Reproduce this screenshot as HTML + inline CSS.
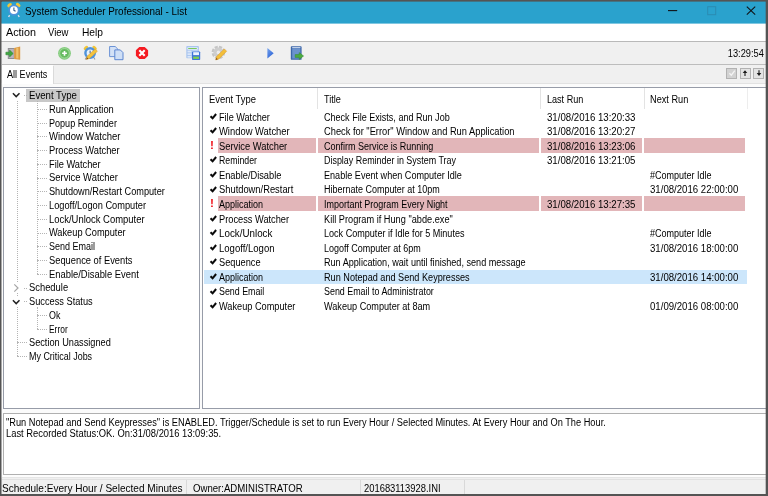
<!DOCTYPE html><html><head><meta charset="utf-8"><title>System Scheduler Professional - List</title><style>
html,body{margin:0;padding:0}
body{width:768px;height:496px;overflow:hidden;background:#555;position:relative;font-family:"Liberation Sans",sans-serif;}
.r{position:absolute}
.t{position:absolute;white-space:pre;line-height:1;transform-origin:0 0;}
svg{position:absolute;overflow:visible}

</style></head><body><div id="app" style="position:absolute;left:0;top:0;width:768px;height:496px;overflow:hidden;filter:blur(0.4px)">
<div class="r" style="left:0.00px;top:0.00px;width:768.00px;height:496.00px;background:#545454;"></div>
<div class="r" style="left:1.00px;top:1.00px;width:765.00px;height:23.00px;background:#2aa2cd;"></div>
<div class="r" style="left:1.00px;top:23.60px;width:765.00px;height:18.00px;background:#ffffff;"></div>
<div class="r" style="left:1.00px;top:23.00px;width:765.00px;height:1.00px;background:#7fc7e1;"></div>
<div class="r" style="left:1.00px;top:41.00px;width:765.00px;height:1.00px;background:#b9b9b9;"></div>
<div class="r" style="left:1.00px;top:42.00px;width:765.00px;height:22.00px;background:#f0f0f0;"></div>
<div class="r" style="left:1.00px;top:63.70px;width:765.00px;height:1.00px;background:#bdbdbd;"></div>
<div class="r" style="left:1.00px;top:64.70px;width:765.00px;height:19.00px;background:#f0f0f0;"></div>
<div class="r" style="left:1.00px;top:83.00px;width:765.00px;height:4.00px;background:#fbfbfb;"></div>
<div class="r" style="left:1.00px;top:82.60px;width:765.00px;height:1.00px;background:#e2e2e2;"></div>
<div class="r" style="left:2.00px;top:65.00px;width:51.00px;height:19.00px;background:#ffffff;"></div>
<div class="r" style="left:53.00px;top:65.50px;width:1.00px;height:18.00px;background:#dadada;"></div>
<div class="r" style="left:1.00px;top:87.00px;width:765.00px;height:391.00px;background:#fbfbfb;"></div>
<div class="r" style="left:1.00px;top:475.00px;width:765.00px;height:2.00px;background:#fdfdfd;"></div>
<div class="r" style="left:1.00px;top:477.00px;width:765.00px;height:17.00px;background:#f0f0f0;"></div>
<div class="r" style="left:1.00px;top:477.00px;width:765.00px;height:1.00px;background:#e5e5e5;"></div>
<div class="r" style="left:1.00px;top:479.00px;width:765.00px;height:1.00px;background:#e1e1e1;"></div>
<div class="r" style="left:1.00px;top:1.00px;width:765.00px;height:1.00px;background:#437384;"></div>
<div class="r" style="left:1.00px;top:2.00px;width:1.00px;height:21.00px;background:#3f7b90;"></div>
<div class="r" style="left:1.00px;top:23.00px;width:1.00px;height:1.00px;background:#6a8e9a;"></div>
<div class="r" style="left:1.00px;top:24.00px;width:1.00px;height:17.00px;background:#aaaaaa;"></div>
<div class="r" style="left:1.00px;top:41.00px;width:1.00px;height:1.00px;background:#868686;"></div>
<div class="r" style="left:1.00px;top:42.00px;width:1.00px;height:41.00px;background:#a2a2a2;"></div>
<div class="r" style="left:1.00px;top:83.00px;width:1.00px;height:395.00px;background:#a8a8a8;"></div>
<div class="r" style="left:1.00px;top:478.00px;width:1.00px;height:16.00px;background:#a2a2a2;"></div>
<div class="r" style="left:1.00px;top:1.00px;width:1.00px;height:1.00px;background:#545454;"></div>
<div class="r" style="left:3.40px;top:86.60px;width:196.20px;height:322.40px;background:#979ca8;"></div>
<div class="r" style="left:4.40px;top:87.60px;width:194.20px;height:320.40px;background:#ffffff;"></div>
<div class="r" style="left:202.00px;top:86.60px;width:565.00px;height:322.40px;background:#979ca8;"></div>
<div class="r" style="left:203.00px;top:87.60px;width:563.00px;height:320.40px;background:#ffffff;"></div>
<div class="r" style="left:3.40px;top:413.40px;width:763.60px;height:61.60px;background:#b0b0b0;"></div>
<div class="r" style="left:4.40px;top:414.40px;width:761.60px;height:59.60px;background:#ffffff;"></div>
<div class="r" style="left:26.00px;top:89.00px;width:53.50px;height:13.00px;background:#c8c8c8;"></div>
<div class="r" style="left:17.00px;top:101.15px;width:0;height:255.06px;border-left:1px dotted #b4b4b4"></div>
<div class="r" style="left:37.00px;top:101.15px;width:0;height:172.62px;border-left:1px dotted #b4b4b4"></div>
<div class="r" style="left:37.00px;top:307.25px;width:0;height:21.48px;border-left:1px dotted #b4b4b4"></div>
<div class="r" style="left:23.50px;top:95.15px;width:3.00px;height:0;border-top:1px dotted #b4b4b4"></div>
<div class="r" style="left:37.00px;top:108.89px;width:9.50px;height:0;border-top:1px dotted #b4b4b4"></div>
<div class="r" style="left:37.00px;top:122.63px;width:9.50px;height:0;border-top:1px dotted #b4b4b4"></div>
<div class="r" style="left:37.00px;top:136.37px;width:9.50px;height:0;border-top:1px dotted #b4b4b4"></div>
<div class="r" style="left:37.00px;top:150.11px;width:9.50px;height:0;border-top:1px dotted #b4b4b4"></div>
<div class="r" style="left:37.00px;top:163.85px;width:9.50px;height:0;border-top:1px dotted #b4b4b4"></div>
<div class="r" style="left:37.00px;top:177.59px;width:9.50px;height:0;border-top:1px dotted #b4b4b4"></div>
<div class="r" style="left:37.00px;top:191.33px;width:9.50px;height:0;border-top:1px dotted #b4b4b4"></div>
<div class="r" style="left:37.00px;top:205.07px;width:9.50px;height:0;border-top:1px dotted #b4b4b4"></div>
<div class="r" style="left:37.00px;top:218.81px;width:9.50px;height:0;border-top:1px dotted #b4b4b4"></div>
<div class="r" style="left:37.00px;top:232.55px;width:9.50px;height:0;border-top:1px dotted #b4b4b4"></div>
<div class="r" style="left:37.00px;top:246.29px;width:9.50px;height:0;border-top:1px dotted #b4b4b4"></div>
<div class="r" style="left:37.00px;top:260.03px;width:9.50px;height:0;border-top:1px dotted #b4b4b4"></div>
<div class="r" style="left:37.00px;top:273.77px;width:9.50px;height:0;border-top:1px dotted #b4b4b4"></div>
<div class="r" style="left:23.50px;top:287.51px;width:3.00px;height:0;border-top:1px dotted #b4b4b4"></div>
<div class="r" style="left:23.50px;top:301.25px;width:3.00px;height:0;border-top:1px dotted #b4b4b4"></div>
<div class="r" style="left:37.00px;top:314.99px;width:9.50px;height:0;border-top:1px dotted #b4b4b4"></div>
<div class="r" style="left:37.00px;top:328.73px;width:9.50px;height:0;border-top:1px dotted #b4b4b4"></div>
<div class="r" style="left:17.00px;top:342.47px;width:9.50px;height:0;border-top:1px dotted #b4b4b4"></div>
<div class="r" style="left:17.00px;top:356.21px;width:9.50px;height:0;border-top:1px dotted #b4b4b4"></div>
<div class="r" style="left:12.00px;top:90.15px;width:10.00px;height:10.00px;background:#fff;"></div>
<svg style="left:11.40px;top:91.45px" width="10" height="8" viewBox="0 0 10 8"><path d="M1.9 2.3 L5.2 5.6 L8.5 2.3" fill="none" stroke="#222" stroke-width="1.5"/></svg>
<div class="r" style="left:12.00px;top:282.51px;width:10.00px;height:10.00px;background:#fff;"></div>
<svg style="left:12.40px;top:282.51px" width="8" height="10" viewBox="0 0 8 10"><path d="M2.3 1.3 L6 5 L2.3 8.7" fill="none" stroke="#a6a6a6" stroke-width="1.2"/></svg>
<div class="r" style="left:12.00px;top:296.25px;width:10.00px;height:10.00px;background:#fff;"></div>
<svg style="left:11.40px;top:297.55px" width="10" height="8" viewBox="0 0 10 8"><path d="M1.9 2.3 L5.2 5.6 L8.5 2.3" fill="none" stroke="#222" stroke-width="1.5"/></svg>
<div class="r" style="left:317.30px;top:88.00px;width:1.00px;height:20.50px;background:#e3e3e3;"></div>
<div class="r" style="left:540.00px;top:88.00px;width:1.00px;height:20.50px;background:#e3e3e3;"></div>
<div class="r" style="left:643.60px;top:88.00px;width:1.00px;height:20.50px;background:#e3e3e3;"></div>
<div class="r" style="left:746.80px;top:88.00px;width:1.00px;height:20.50px;background:#ededed;"></div>
<svg style="left:209.5px;top:112.60px" width="7" height="7" viewBox="0 0 7 7"><path d="M0.5 3.2 L2.6 5.3 L6.1 1.0" fill="none" stroke="#0a0a0a" stroke-width="2"/></svg>
<svg style="left:209.5px;top:127.18px" width="7" height="7" viewBox="0 0 7 7"><path d="M0.5 3.2 L2.6 5.3 L6.1 1.0" fill="none" stroke="#0a0a0a" stroke-width="2"/></svg>
<div class="r" style="left:217.70px;top:138.16px;width:98.70px;height:14.70px;background:#e2b6b9;"></div>
<div class="r" style="left:318.20px;top:138.16px;width:220.90px;height:14.70px;background:#e2b6b9;"></div>
<div class="r" style="left:541.20px;top:138.16px;width:100.60px;height:14.70px;background:#e2b6b9;"></div>
<div class="r" style="left:644.40px;top:138.16px;width:101.10px;height:14.70px;background:#e2b6b9;"></div>
<svg style="left:209.5px;top:156.34px" width="7" height="7" viewBox="0 0 7 7"><path d="M0.5 3.2 L2.6 5.3 L6.1 1.0" fill="none" stroke="#0a0a0a" stroke-width="2"/></svg>
<svg style="left:209.5px;top:170.92px" width="7" height="7" viewBox="0 0 7 7"><path d="M0.5 3.2 L2.6 5.3 L6.1 1.0" fill="none" stroke="#0a0a0a" stroke-width="2"/></svg>
<svg style="left:209.5px;top:185.50px" width="7" height="7" viewBox="0 0 7 7"><path d="M0.5 3.2 L2.6 5.3 L6.1 1.0" fill="none" stroke="#0a0a0a" stroke-width="2"/></svg>
<div class="r" style="left:217.70px;top:196.48px;width:98.70px;height:14.70px;background:#e2b6b9;"></div>
<div class="r" style="left:318.20px;top:196.48px;width:220.90px;height:14.70px;background:#e2b6b9;"></div>
<div class="r" style="left:541.20px;top:196.48px;width:100.60px;height:14.70px;background:#e2b6b9;"></div>
<div class="r" style="left:644.40px;top:196.48px;width:101.10px;height:14.70px;background:#e2b6b9;"></div>
<svg style="left:209.5px;top:214.66px" width="7" height="7" viewBox="0 0 7 7"><path d="M0.5 3.2 L2.6 5.3 L6.1 1.0" fill="none" stroke="#0a0a0a" stroke-width="2"/></svg>
<svg style="left:209.5px;top:229.24px" width="7" height="7" viewBox="0 0 7 7"><path d="M0.5 3.2 L2.6 5.3 L6.1 1.0" fill="none" stroke="#0a0a0a" stroke-width="2"/></svg>
<svg style="left:209.5px;top:243.82px" width="7" height="7" viewBox="0 0 7 7"><path d="M0.5 3.2 L2.6 5.3 L6.1 1.0" fill="none" stroke="#0a0a0a" stroke-width="2"/></svg>
<svg style="left:209.5px;top:258.40px" width="7" height="7" viewBox="0 0 7 7"><path d="M0.5 3.2 L2.6 5.3 L6.1 1.0" fill="none" stroke="#0a0a0a" stroke-width="2"/></svg>
<div class="r" style="left:203.80px;top:270.08px;width:543.50px;height:13.90px;background:#cce6fb;"></div>
<svg style="left:209.5px;top:272.98px" width="7" height="7" viewBox="0 0 7 7"><path d="M0.5 3.2 L2.6 5.3 L6.1 1.0" fill="none" stroke="#0a0a0a" stroke-width="2"/></svg>
<svg style="left:209.5px;top:287.56px" width="7" height="7" viewBox="0 0 7 7"><path d="M0.5 3.2 L2.6 5.3 L6.1 1.0" fill="none" stroke="#0a0a0a" stroke-width="2"/></svg>
<svg style="left:209.5px;top:302.14px" width="7" height="7" viewBox="0 0 7 7"><path d="M0.5 3.2 L2.6 5.3 L6.1 1.0" fill="none" stroke="#0a0a0a" stroke-width="2"/></svg>
<div class="r" style="left:186.00px;top:479.50px;width:1.00px;height:14.50px;background:#d9d9d9;"></div>
<div class="r" style="left:360.00px;top:479.50px;width:1.00px;height:14.50px;background:#d9d9d9;"></div>
<div class="r" style="left:464.00px;top:479.50px;width:1.00px;height:14.50px;background:#d9d9d9;"></div>
<svg style="left:6.00px;top:2.00px" width="16" height="16" viewBox="0 0 16 16">
<ellipse cx="3.6" cy="3.2" rx="2.6" ry="1.7" transform="rotate(-38 3.6 3.2)" fill="#f0c63a"/>
<ellipse cx="12.2" cy="3.0" rx="2.6" ry="1.7" transform="rotate(38 12.2 3.0)" fill="#f0c63a"/>
<path d="M3.6 13.2 L2.6 15 M12.2 13.2 L13.2 15" stroke="#d8dde8" stroke-width="1.4"/>
<circle cx="7.9" cy="8.1" r="5.6" fill="#4f93dc"/>
<circle cx="7.9" cy="8.1" r="3.9" fill="#ffffff"/>
<path d="M7.9 5.6 V8.3 L9.6 9.2" stroke="#3a5f8c" stroke-width="1.1" fill="none"/>
</svg>
<svg style="left:4.00px;top:44.00px" width="20" height="18" viewBox="0 0 20 18">
<rect x="3.8" y="4" width="6.6" height="11" fill="#8f8f93"/>
<rect x="4.8" y="5" width="5" height="9" fill="#b9b3bf"/>
<path d="M10.1 4 L16.2 2.4 L16.2 15.8 L10.1 15 Z" fill="#dc9a45"/>
<path d="M12.2 4.2 L14.4 3.6 L14.4 14.6 L12.2 14.2 Z" fill="#f0c26a"/>
<path d="M1.9 8.2 H5.6 V6.1 L9.2 9.5 L5.6 12.9 V10.8 H1.9 Z" fill="#3fa640" stroke="#2f8a33" stroke-width="0.6"/>
</svg>
<svg style="left:57.00px;top:46.00px" width="15" height="15" viewBox="0 0 15 15">
<circle cx="7.5" cy="7.3" r="6.4" fill="#84cb7e"/>
<circle cx="7.5" cy="7.3" r="4.8" fill="#66bb60" stroke="#a8dea1" stroke-width="0.8"/>
<path d="M7.5 4.9 V9.7 M5.1 7.3 H9.9" stroke="#fff" stroke-width="1.6"/>
</svg>
<svg style="left:82.00px;top:45.00px" width="17" height="16" viewBox="0 0 17 16">
<ellipse cx="3.9" cy="2.9" rx="2.5" ry="1.6" transform="rotate(-38 3.9 2.9)" fill="#f0c437"/>
<ellipse cx="12.6" cy="2.9" rx="2.5" ry="1.6" transform="rotate(38 12.6 2.9)" fill="#f0c437"/>
<path d="M4.2 12.8 L3.2 14.5 M12 12.8 L13 14.5" stroke="#9a9a9a" stroke-width="1.1"/>
<circle cx="8.1" cy="8" r="5.9" fill="#4f93dc"/>
<circle cx="8.1" cy="8" r="3.5" fill="#e8f2fc"/>
<path d="M8.1 5.6 V8.2 L9.4 9" stroke="#3a5f8c" stroke-width="1" fill="none"/>
<path d="M15.4 6.3 L7.4 13.4 L4.4 14.4 L5.2 11.2 L13.2 4 Z" fill="#f4c33c" stroke="#dfa02c" stroke-width="0.6"/>
<path d="M4.4 14.4 L4.9 12.3 L6.4 13.7 Z" fill="#7a4a1c"/>
</svg>
<svg style="left:108.00px;top:45.00px" width="16" height="16" viewBox="0 0 16 16">
<path d="M1.6 1.5 H7.2 L9.9 4.2 V11.6 H1.6 Z" fill="#d3e1f6" stroke="#6c93d6" stroke-width="1"/>
<path d="M6.8 4.9 H12.3 L15 7.6 V14.7 H6.8 Z" fill="#cfdff6" stroke="#5c86d0" stroke-width="1"/>
</svg>
<svg style="left:135.00px;top:46.00px" width="14" height="14" viewBox="0 0 14 14">
<path d="M4.3 0.9 H9.7 L13.1 4.3 V9.7 L9.7 13.1 H4.3 L0.9 9.7 V4.3 Z" fill="#f51b22"/>
<path d="M4.3 4.3 L9.7 9.7 M9.7 4.3 L4.3 9.7" stroke="#fff" stroke-width="2.1"/>
</svg>
<svg style="left:185.00px;top:45.00px" width="16" height="16" viewBox="0 0 16 16">
<rect x="1.3" y="1.1" width="12.6" height="12.2" rx="0.8" fill="#a9c5ee"/>
<rect x="2.5" y="2.4" width="10.2" height="2.2" fill="#f4f8ff"/>
<rect x="3.2" y="3" width="8.6" height="0.9" fill="#6cc24a"/>
<rect x="2.5" y="5.6" width="4" height="1.8" fill="#dbe7f9"/><rect x="7.3" y="5.6" width="5.4" height="1.8" fill="#dbe7f9"/>
<rect x="2.5" y="8.3" width="4" height="1.8" fill="#dbe7f9"/>
<rect x="2.5" y="11" width="4" height="1.6" fill="#dbe7f9"/>
<rect x="7" y="6.5" width="8.2" height="8.4" rx="0.7" fill="#3f75d8"/>
<rect x="8.2" y="7.2" width="5.8" height="2.9" fill="#eef4ff"/>
<rect x="8.2" y="11.6" width="5.8" height="2.3" fill="#7fd04e"/>
</svg>
<svg style="left:211.00px;top:45.00px" width="17" height="16" viewBox="0 0 17 16">
<circle cx="7.4" cy="7.4" r="5.3" fill="none" stroke="#c4c4c4" stroke-width="3" stroke-dasharray="2.9 1.26"/>
<circle cx="7.4" cy="7.4" r="5" fill="#cdcdcd"/>
<circle cx="7.4" cy="7.4" r="1.8" fill="#ececec"/>
<path d="M15.6 6.2 L7.9 13.9 L4.7 14.9 L5.6 11.6 L13.3 3.9 Z" fill="#f3bf3a" stroke="#dc9c2c" stroke-width="0.6"/>
<path d="M4.7 14.9 L5.3 12.8 L6.8 14.2 Z" fill="#8a531e"/>
</svg>
<svg style="left:266.00px;top:46.00px" width="9" height="14" viewBox="0 0 9 14">
<defs><linearGradient id="pg" x1="0" y1="0" x2="0.6" y2="1"><stop offset="0" stop-color="#7aa7ee"/><stop offset="1" stop-color="#2b62d6"/></linearGradient></defs>
<path d="M1.4 1.9 L7.7 7.2 L1.4 12.5 Z" fill="url(#pg)"/>
</svg>
<svg style="left:290.00px;top:45.00px" width="15" height="16" viewBox="0 0 15 16">
<rect x="0.8" y="1.2" width="10.8" height="13.6" rx="0.9" fill="#3c66a9"/>
<rect x="2.2" y="3.4" width="8.2" height="10.2" fill="#6b93cd"/>
<rect x="2.2" y="2.2" width="8.2" height="0.9" fill="#dfe9f7"/>
<path d="M5.2 9.6 H9.2 V7.6 L13.6 11 L9.2 14.4 V12.4 H5.2 Z" fill="#4cab3f" stroke="#33892f" stroke-width="0.5"/>
</svg>
<svg style="left:660.00px;top:2.00px" width="100" height="20" viewBox="0 0 100 20">
<path d="M8 8.6 H17.2" stroke="#101418" stroke-width="1.1"/>
<rect x="47.7" y="4.7" width="8" height="8" fill="none" stroke="#2b8cb2" stroke-width="1"/>
<path d="M86.8 4.6 L95.2 12.6 M95.2 4.6 L86.8 12.6" stroke="#101418" stroke-width="1.1"/>
</svg>
<div class="r" style="left:726.20px;top:68.00px;width:10.80px;height:10.70px;background:#b2b2b2;"></div>
<div class="r" style="left:727.10px;top:68.90px;width:9.00px;height:8.90px;background:#d2d2d2;"></div>
<svg style="left:727.60px;top:69.35px" width="8" height="8" viewBox="0 0 8 8"><path d="M1.4 4.2 L3.3 6.2 L6.8 1.6" fill="none" stroke="#f4f4f4" stroke-width="1.3"/></svg>
<div class="r" style="left:739.80px;top:68.00px;width:10.90px;height:10.70px;background:#b2b2b2;"></div>
<div class="r" style="left:740.70px;top:68.90px;width:9.10px;height:8.90px;background:#e3e3e3;"></div>
<svg style="left:741.25px;top:69.35px" width="8" height="8" viewBox="0 0 8 8"><path d="M4 1.3 L6.3 4.1 H4.55 V6.9 H3.45 V4.1 H1.7 Z" fill="#1a1a1a"/></svg>
<div class="r" style="left:753.40px;top:68.00px;width:11.00px;height:10.70px;background:#b2b2b2;"></div>
<div class="r" style="left:754.30px;top:68.90px;width:9.20px;height:8.90px;background:#e3e3e3;"></div>
<svg style="left:754.90px;top:69.35px" width="8" height="8" viewBox="0 0 8 8"><path d="M4 6.9 L6.3 4.1 H4.55 V1.3 H3.45 V4.1 H1.7 Z" fill="#1a1a1a"/></svg>
<div class="r" style="left:765.00px;top:1.00px;width:1.00px;height:493.00px;background:rgba(78,78,78,0.3);"></div>
<div class="r" style="left:766.00px;top:0.00px;width:2.00px;height:496.00px;background:#545454;"></div>
<span class="t" style="left:24.80px;top:6.83px;font-size:10.2px;color:#000;transform:scaleX(0.9732);">System Scheduler Professional - List</span>
<span class="t" style="left:5.70px;top:27.73px;font-size:10.2px;color:#000;transform:scaleX(1.0590);">Action</span>
<span class="t" style="left:48.10px;top:27.73px;font-size:10.2px;color:#000;transform:scaleX(0.9358);">View</span>
<span class="t" style="left:81.50px;top:27.73px;font-size:10.2px;color:#000;transform:scaleX(1.0022);">Help</span>
<span class="t" style="right:4.30px;top:48.25px;font-size:11px;color:#000;transform:scaleX(0.8406);transform-origin:100% 0;">13:29:54</span>
<span class="t" style="left:6.70px;top:70.10px;font-size:10.0px;color:#000;transform:scaleX(0.9063);">All Events</span>
<span class="t" style="left:28.90px;top:91.05px;font-size:10.0px;color:#000;transform:scaleX(0.9607);">Event Type</span>
<span class="t" style="left:48.90px;top:104.79px;font-size:10.0px;color:#000;transform:scaleX(0.9324);">Run Application</span>
<span class="t" style="left:48.90px;top:118.53px;font-size:10.0px;color:#000;transform:scaleX(0.9048);">Popup Reminder</span>
<span class="t" style="left:48.90px;top:132.27px;font-size:10.0px;color:#000;transform:scaleX(0.9492);">Window Watcher</span>
<span class="t" style="left:48.90px;top:146.01px;font-size:10.0px;color:#000;transform:scaleX(0.9318);">Process Watcher</span>
<span class="t" style="left:48.90px;top:159.75px;font-size:10.0px;color:#000;transform:scaleX(0.9253);">File Watcher</span>
<span class="t" style="left:48.90px;top:173.49px;font-size:10.0px;color:#000;transform:scaleX(0.9440);">Service Watcher</span>
<span class="t" style="left:48.90px;top:187.23px;font-size:10.0px;color:#000;transform:scaleX(0.9178);">Shutdown/Restart Computer</span>
<span class="t" style="left:48.90px;top:200.97px;font-size:10.0px;color:#000;transform:scaleX(0.9251);">Logoff/Logon Computer</span>
<span class="t" style="left:48.90px;top:214.71px;font-size:10.0px;color:#000;transform:scaleX(0.9451);">Lock/Unlock Computer</span>
<span class="t" style="left:48.90px;top:228.45px;font-size:10.0px;color:#000;transform:scaleX(0.9229);">Wakeup Computer</span>
<span class="t" style="left:48.90px;top:242.19px;font-size:10.0px;color:#000;transform:scaleX(0.8995);">Send Email</span>
<span class="t" style="left:48.90px;top:255.93px;font-size:10.0px;color:#000;transform:scaleX(0.9328);">Sequence of Events</span>
<span class="t" style="left:48.90px;top:269.67px;font-size:10.0px;color:#000;transform:scaleX(0.9391);">Enable/Disable Event</span>
<span class="t" style="left:28.90px;top:283.41px;font-size:10.0px;color:#000;transform:scaleX(0.9376);">Schedule</span>
<span class="t" style="left:28.90px;top:297.15px;font-size:10.0px;color:#000;transform:scaleX(0.9242);">Success Status</span>
<span class="t" style="left:48.90px;top:310.89px;font-size:10.0px;color:#000;transform:scaleX(0.8919);">Ok</span>
<span class="t" style="left:48.90px;top:324.63px;font-size:10.0px;color:#000;transform:scaleX(0.8410);">Error</span>
<span class="t" style="left:28.90px;top:338.37px;font-size:10.0px;color:#000;transform:scaleX(0.9196);">Section Unassigned</span>
<span class="t" style="left:28.90px;top:352.11px;font-size:10.0px;color:#000;transform:scaleX(0.8940);">My Critical Jobs</span>
<span class="t" style="left:209.30px;top:94.50px;font-size:10.0px;color:#000;transform:scaleX(0.9427);">Event Type</span>
<span class="t" style="left:323.70px;top:94.50px;font-size:10.0px;color:#000;transform:scaleX(0.9120);">Title</span>
<span class="t" style="left:546.50px;top:94.50px;font-size:10.0px;color:#000;transform:scaleX(0.9068);">Last Run</span>
<span class="t" style="left:649.50px;top:94.50px;font-size:10.0px;color:#000;transform:scaleX(0.9187);">Next Run</span>
<span class="t" style="left:219.40px;top:112.50px;font-size:10.0px;color:#000;transform:scaleX(0.9127);">File Watcher</span>
<span class="t" style="left:323.70px;top:112.50px;font-size:10.0px;color:#000;transform:scaleX(0.9046);">Check File Exists, and Run Job</span>
<span class="t" style="left:546.50px;top:112.50px;font-size:10.0px;color:#000;transform:scaleX(0.9644);">31/08/2016 13:20:33</span>
<span class="t" style="left:219.40px;top:127.08px;font-size:10.0px;color:#000;transform:scaleX(0.9399);">Window Watcher</span>
<span class="t" style="left:323.70px;top:127.08px;font-size:10.0px;color:#000;transform:scaleX(0.9293);">Check for "Error" Window and Run Application</span>
<span class="t" style="left:546.50px;top:127.08px;font-size:10.0px;color:#000;transform:scaleX(0.9644);">31/08/2016 13:20:27</span>
<span class="t" style="left:210.20px;top:139.95px;font-size:10.6px;color:#f0141c;transform:scaleX(1.1200);font-weight:bold;">!</span>
<span class="t" style="left:219.40px;top:141.66px;font-size:10.0px;color:#000;transform:scaleX(0.9344);">Service Watcher</span>
<span class="t" style="left:323.70px;top:141.66px;font-size:10.0px;color:#000;transform:scaleX(0.9020);">Confirm Service is Running</span>
<span class="t" style="left:546.50px;top:141.66px;font-size:10.0px;color:#000;transform:scaleX(0.9644);">31/08/2016 13:23:06</span>
<span class="t" style="left:219.40px;top:156.24px;font-size:10.0px;color:#000;transform:scaleX(0.8764);">Reminder</span>
<span class="t" style="left:323.70px;top:156.24px;font-size:10.0px;color:#000;transform:scaleX(0.8923);">Display Reminder in System Tray</span>
<span class="t" style="left:546.50px;top:156.24px;font-size:10.0px;color:#000;transform:scaleX(0.9644);">31/08/2016 13:21:05</span>
<span class="t" style="left:219.40px;top:170.82px;font-size:10.0px;color:#000;transform:scaleX(0.9277);">Enable/Disable</span>
<span class="t" style="left:323.70px;top:170.82px;font-size:10.0px;color:#000;transform:scaleX(0.9086);">Enable Event when Computer Idle</span>
<span class="t" style="left:649.50px;top:170.82px;font-size:10.0px;color:#000;transform:scaleX(0.9009);">#Computer Idle</span>
<span class="t" style="left:219.40px;top:185.40px;font-size:10.0px;color:#000;transform:scaleX(0.9346);">Shutdown/Restart</span>
<span class="t" style="left:323.70px;top:185.40px;font-size:10.0px;color:#000;transform:scaleX(0.8979);">Hibernate Computer at 10pm</span>
<span class="t" style="left:649.50px;top:185.40px;font-size:10.0px;color:#000;transform:scaleX(0.9622);">31/08/2016 22:00:00</span>
<span class="t" style="left:210.20px;top:198.27px;font-size:10.6px;color:#f0141c;transform:scaleX(1.1200);font-weight:bold;">!</span>
<span class="t" style="left:219.40px;top:199.98px;font-size:10.0px;color:#000;transform:scaleX(0.9004);">Application</span>
<span class="t" style="left:323.70px;top:199.98px;font-size:10.0px;color:#000;transform:scaleX(0.8968);">Important Program Every Night</span>
<span class="t" style="left:546.50px;top:199.98px;font-size:10.0px;color:#000;transform:scaleX(0.9644);">31/08/2016 13:27:35</span>
<span class="t" style="left:219.40px;top:214.56px;font-size:10.0px;color:#000;transform:scaleX(0.9252);">Process Watcher</span>
<span class="t" style="left:323.70px;top:214.56px;font-size:10.0px;color:#000;transform:scaleX(0.9203);">Kill Program if Hung "abde.exe"</span>
<span class="t" style="left:219.40px;top:229.14px;font-size:10.0px;color:#000;transform:scaleX(0.9804);">Lock/Unlock</span>
<span class="t" style="left:323.70px;top:229.14px;font-size:10.0px;color:#000;transform:scaleX(0.9060);">Lock Computer if Idle for 5 Minutes</span>
<span class="t" style="left:649.50px;top:229.14px;font-size:10.0px;color:#000;transform:scaleX(0.9009);">#Computer Idle</span>
<span class="t" style="left:219.40px;top:243.72px;font-size:10.0px;color:#000;transform:scaleX(0.9533);">Logoff/Logon</span>
<span class="t" style="left:323.70px;top:243.72px;font-size:10.0px;color:#000;transform:scaleX(0.8992);">Logoff Computer at 6pm</span>
<span class="t" style="left:649.50px;top:243.72px;font-size:10.0px;color:#000;transform:scaleX(0.9622);">31/08/2016 18:00:00</span>
<span class="t" style="left:219.40px;top:258.30px;font-size:10.0px;color:#000;transform:scaleX(0.9224);">Sequence</span>
<span class="t" style="left:323.70px;top:258.30px;font-size:10.0px;color:#000;transform:scaleX(0.9089);">Run Application, wait until finished, send message</span>
<span class="t" style="left:219.40px;top:272.88px;font-size:10.0px;color:#000;transform:scaleX(0.9004);">Application</span>
<span class="t" style="left:323.70px;top:272.88px;font-size:10.0px;color:#000;transform:scaleX(0.9131);">Run Notepad and Send Keypresses</span>
<span class="t" style="left:649.50px;top:272.88px;font-size:10.0px;color:#000;transform:scaleX(0.9622);">31/08/2016 14:00:00</span>
<span class="t" style="left:219.40px;top:287.46px;font-size:10.0px;color:#000;transform:scaleX(0.8858);">Send Email</span>
<span class="t" style="left:323.70px;top:287.46px;font-size:10.0px;color:#000;transform:scaleX(0.8899);">Send Email to Administrator</span>
<span class="t" style="left:219.40px;top:302.04px;font-size:10.0px;color:#000;transform:scaleX(0.9193);">Wakeup Computer</span>
<span class="t" style="left:323.70px;top:302.04px;font-size:10.0px;color:#000;transform:scaleX(0.9127);">Wakeup Computer at 8am</span>
<span class="t" style="left:649.50px;top:302.04px;font-size:10.0px;color:#000;transform:scaleX(0.9622);">01/09/2016 08:00:00</span>
<span class="t" style="left:6.10px;top:417.50px;font-size:10.0px;color:#000;transform:scaleX(0.9243);">"Run Notepad and Send Keypresses" is ENABLED. Trigger/Schedule is set to run Every Hour / Selected Minutes. At Every Hour and On The Hour.</span>
<span class="t" style="left:6.10px;top:429.10px;font-size:10.0px;color:#000;transform:scaleX(0.9372);">Last Recorded Status:OK. On:31/08/2016 13:09:35.</span>
<span class="t" style="left:1.70px;top:483.29px;font-size:10.6px;color:#000;transform:scaleX(0.9490);">Schedule:Every Hour / Selected Minutes</span>
<span class="t" style="left:193.00px;top:483.29px;font-size:10.6px;color:#000;transform:scaleX(0.9067);">Owner:ADMINISTRATOR</span>
<span class="t" style="left:364.30px;top:483.29px;font-size:10.6px;color:#000;transform:scaleX(0.8865);">201683113928.INI</span>
</div></body></html>
